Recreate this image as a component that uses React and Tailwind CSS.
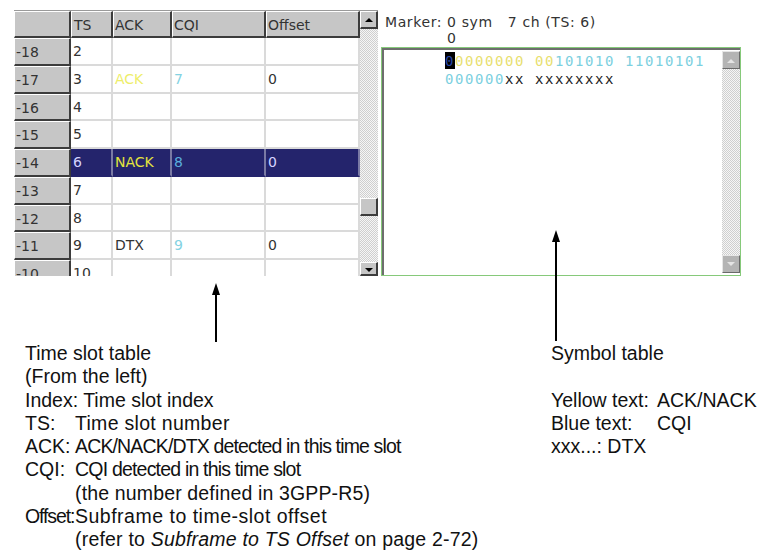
import React from 'react';

// Time slot table + symbol table figure

const rows = [
  { i: '-18', ts: '2' },
  { i: '-17', ts: '3', ack: 'ACK', cqi: '7', off: '0' },
  { i: '-16', ts: '4' },
  { i: '-15', ts: '5' },
  { i: '-14', ts: '6', ack: 'NACK', cqi: '8', off: '0', sel: true },
  { i: '-13', ts: '7' },
  { i: '-12', ts: '8' },
  { i: '-11', ts: '9', ack: 'DTX', cqi: '9', off: '0' },
  { i: '-10', ts: '10' },
];

const bevel =
  'bg-[#c6c6c6] border-t border-l border-white border-b-2 border-r-2 border-b-[#3c3c3c] border-r-[#3c3c3c]';

function ScrollBtn({ up, muted, cut }) {
  return (
    <div
      className={`${cut ? 'h-[14px] items-start pt-[5px]' : 'h-[18px] items-center'} w-full flex justify-center ${
        muted
          ? 'bg-[#b4b4b4] border-t border-l border-[#e6e6e6] border-b border-r border-b-[#6a6a6a] border-r-[#6a6a6a]'
          : bevel
      }`}
    >
      <svg width="8" height="5" viewBox="0 0 8 5">
        <path d={up ? 'M0 5 L4 1 L8 5Z' : 'M0 0 L4 4 L8 0Z'} fill={muted ? '#e4e4e4' : '#000'} />
      </svg>
    </div>
  );
}

function Dither({ className = '' }) {
  return (
    <div
      className={`bg-[repeating-conic-gradient(#cfcfcf_0%_25%,#f6f6f6_0%_50%)] bg-[length:2px_2px] ${className}`}
    />
  );
}

function Cell({ w, children, cls = '', sel }) {
  return (
    <div
      className={`${w} h-full shrink-0 pl-[2px] overflow-hidden whitespace-nowrap border-r-2 border-b-2 ${
        sel ? 'border-r-[#7a7aa4] border-b-[#24246c]' : 'border-r-[#dadada] border-b-[#dadada]'
      } ${cls}`}
    >
      {children}
    </div>
  );
}

function TimeSlotTable() {
  return (
    <div className="w-[364px] h-[266px] flex overflow-hidden border-t border-[#9a9a9a] font-[family-name:'DejaVu_Sans',Verdana,sans-serif] text-[14px] leading-[26px] text-[#333]">
      <div className="w-[346px] flex flex-col">
        <div className="h-[27px] flex shrink-0">
          <div className={`w-[57px] shrink-0 ${bevel}`} />
          <div className={`w-[42px] shrink-0 pl-[2px] ${bevel}`}>TS</div>
          <div className={`w-[59px] shrink-0 pl-[1px] ${bevel}`}>ACK</div>
          <div className={`w-[94px] shrink-0 pl-[1px] ${bevel}`}>CQI</div>
          <div className={`w-[94px] shrink-0 pl-[1px] ${bevel}`}>Offset</div>
        </div>
        {rows.map((r) => (
          <div key={r.i} className={`h-[27.75px] flex shrink-0 ${r.sel ? 'bg-[#24246c]' : 'bg-white'}`}>
            <div className={`w-[57px] shrink-0 pl-[1px] ${bevel} border-r-[#1c1c1c]`}>{r.i}</div>
            <Cell w="w-[42px]" sel={r.sel} cls={r.sel ? 'text-[#d4d4ff]' : ''}>
              {r.ts}
            </Cell>
            <Cell
              w="w-[59px]"
              sel={r.sel}
              cls={r.ack === 'DTX' ? 'text-[#333]' : r.sel ? 'text-[#e4e43c]' : 'text-[#eeee6a]'}
            >
              {r.ack}
            </Cell>
            <Cell w="w-[94px]" sel={r.sel} cls={r.sel ? 'text-[#5aaedc] pl-[1px]' : 'text-[#84d2e2] pl-[1px]'}>
              {r.cqi}
            </Cell>
            <Cell w="w-[94px]" sel={r.sel} cls={r.sel ? 'text-[#d4d4ff]' : ''}>
              {r.off}
            </Cell>
          </div>
        ))}
      </div>
      <div className="w-[18px] flex flex-col shrink-0">
        <ScrollBtn up />
        <Dither className="h-[169px]" />
        <div className={`h-[18px] ${bevel}`} />
        <Dither className="flex-1" />
        <ScrollBtn cut />
      </div>
    </div>
  );
}

const Y = 'text-[#e8e070]';
const B = 'text-[#7ccfe0]';

function SymbolPanel() {
  return (
    <div className="w-[360px] flex flex-col font-[family-name:'DejaVu_Sans',Verdana,sans-serif] text-[14px] leading-[16px] text-[#333]">
      <div className="pt-[4px] pl-[4px] whitespace-pre tracking-[0.6px]">Marker: 0 sym   7 ch (TS: 6)</div>
      <div className="pl-[66px]">0</div>
      <div className="mt-[1px] h-[229px] border border-[#86c97a] flex">
        <div className="flex-1 flex border-t-2 border-l-2 border-[#6e6e6e] bg-white">
          <div className="flex-1 pt-[2px] pl-[61px] font-[family-name:'DejaVu_Sans_Mono',monospace] text-[14px] leading-[18px] tracking-[1.57px] whitespace-pre">
            <div>
              <span className="bg-black text-[#2848a8] inline-block h-[17px]">0</span>
              <span className={Y}>0000000 00</span>
              <span className={B}>101010 11010101</span>
            </div>
            <div>
              <span className={B}>000000</span>
              <span className="text-[#222]">xx xxxxxxxx</span>
            </div>
          </div>
          <div className="w-[18px] flex flex-col shrink-0 pt-[1px] pb-[2px]">
            <ScrollBtn up muted />
            <Dither className="flex-1" />
            <ScrollBtn muted />
          </div>
        </div>
      </div>
    </div>
  );
}

function Arrow({ h }) {
  return (
    <svg width="12" height={h} viewBox={`0 0 12 ${h}`} className="block">
      <path d="M6 1 L2 13 L10 13 Z" fill="#000" />
      <line x1="6" y1="12" x2="6" y2={h} stroke="#000" strokeWidth="2" />
    </svg>
  );
}

export default function App() {
  const sans = "font-[family-name:'Liberation_Sans',Arial,sans-serif]";
  return (
    <div className="relative w-[757px] h-[558px] bg-white overflow-hidden">
      <div className="h-[276px] flex pt-[10px] pl-[14px] gap-[3px]">
        <TimeSlotTable />
        <SymbolPanel />
      </div>

      <div className="absolute left-[550px] top-[229px]">
        <Arrow h={112} />
      </div>

      <div className={`flex ${sans} text-[19.5px] leading-[23.3px] text-[#111]`}>
        <div className="w-[551px] pl-[25px]">
          <div className="ml-[185px] pt-[6px]">
            <Arrow h={60} />
          </div>
          <div>Time slot table</div>
          <div>(From the left)</div>
          <div>Index: Time slot index</div>
          <div className="grid grid-cols-[50px_1fr] whitespace-nowrap">
            <span>TS:</span>
            <span className="tracking-[0.3px]">Time slot number</span>
            <span>ACK:</span>
            <span className="tracking-[-0.85px]">ACK/NACK/DTX detected in this time slot</span>
            <span>CQI:</span>
            <span className="tracking-[-0.8px]">CQI detected in this time slot</span>
            <span />
            <span className="tracking-[0.15px]">(the number defined in 3GPP-R5)</span>
            <span className="tracking-[-1.1px]">Offset:</span>
            <span className="tracking-[0.5px]">Subframe to time-slot offset</span>
            <span />
            <span className="tracking-[0.2px]">
              (refer to <i>Subframe to TS Offset</i> on page 2-72)
            </span>
          </div>
        </div>
        <div className="flex-1 pt-[66px]">
          <div>Symbol table</div>
          <div className="h-[23.3px]" />
          <div className="grid grid-cols-[106px_1fr]">
            <span>Yellow text:</span>
            <span>ACK/NACK</span>
            <span>Blue text:</span>
            <span>CQI</span>
          </div>
          <div>xxx...: DTX</div>
        </div>
      </div>
    </div>
  );
}
